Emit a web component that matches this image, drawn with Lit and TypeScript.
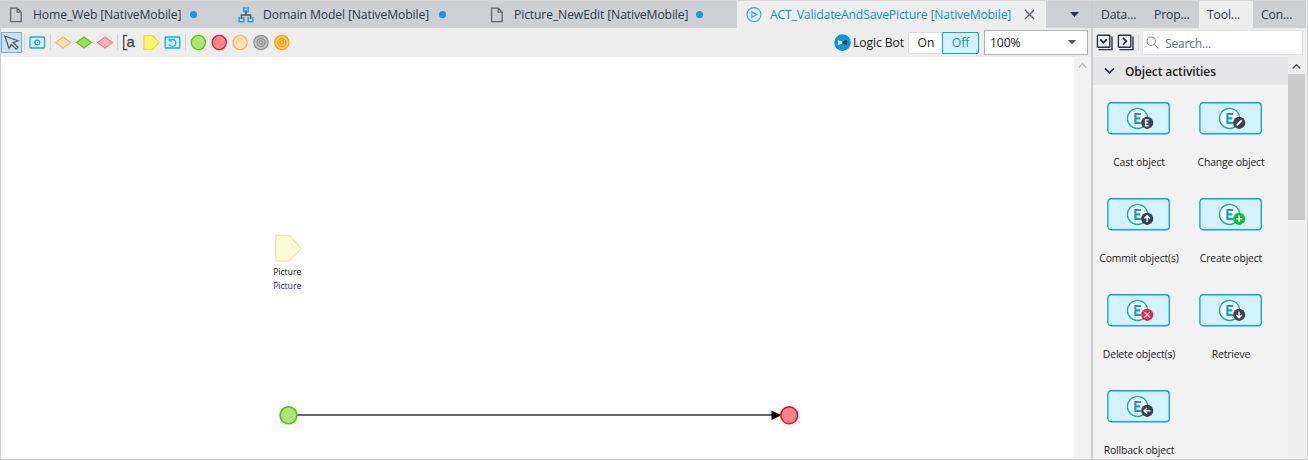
import { LitElement, html, svg, css } from "lit";
import { customElement } from "lit/decorators.js";
import { classMap } from "lit/directives/class-map.js";

const pageIcon = html`<svg width="14" height="16" viewBox="0 0 14 16" fill="none" stroke="#666" stroke-width="1.3"><path d="M1.6 1.1H8.2L12.2 5.2V14.6H1.6Z M8.2 1.1V5.2H12.2"/></svg>`;
const domainIcon = html`<svg width="16" height="16" viewBox="0 0 16 16" fill="none"><g stroke="#1aa5f5" stroke-width="1.5"><path d="M6.8 .9H5.8V4.8H10.2V.9H9.2"/><path d="M2.3 10.8H1.2V14.7H5.8V10.8H4.6"/><path d="M11.3 10.8H10.2V14.7H14.8V10.8H13.7"/><path d="M6.5 .9H9.5" stroke-width="1.2"/></g><path d="M8 3.2V8 M3.4 12V8H12.6V12" stroke="#555" stroke-width="1.4"/></svg>`;
const flowIcon = html`<svg width="16" height="16" viewBox="0 0 16 16" fill="none" stroke="#29abf2" stroke-width="1.2"><circle cx="8" cy="7.6" r="7"/><path d="M5.8 5L11 7.6L5.8 10.2Z"/></svg>`;

const badges: Record<string, unknown> = {
  cast: svg`<path d="M41.7 24.3H38.5V30.1H41.7M38.5 27.2H41.4" stroke="#fff" stroke-width="1.4" fill="none"/>`,
  change: svg`<path d="M37.6 29.8L42.6 24.8" stroke="#fff" stroke-width="1.9"/>`,
  commit: svg`<path d="M40 30.5V24.5M37.2 27L40 24.2L42.8 27" stroke="#fff" stroke-width="1.4" fill="none"/>`,
  create: svg`<path d="M40 24V30.4M36.8 27.2H43.2" stroke="#fff" stroke-width="1.5"/>`,
  delete: svg`<path d="M37.3 24.5L42.7 29.9M42.7 24.5L37.3 29.9" stroke="#fff" stroke-width="1.1"/>`,
  retrieve: svg`<path d="M40 24V30M37.2 27.4L40 30.2L42.8 27.4" stroke="#fff" stroke-width="1.4" fill="none"/>`,
  rollback: svg`<path d="M43.2 27.2H37M39.8 24.4L37 27.2L39.8 30" stroke="#fff" stroke-width="1.4" fill="none"/>`,
};

@customElement("activity-tile")
class ActivityTile extends LitElement {
  static properties = { kind: {}, label: {} };
  declare kind: string;
  declare label: string;
  static styles = css`
    :host { display: flex; flex-direction: column; align-items: center; width: 92px; height: 96px; }
    svg { display: block; margin-top: 11px; }
    .name { margin-top: 19px; line-height: 16px; font-size: 10.4px; letter-spacing: -0.16px; color: #222; white-space: nowrap; }
  `;
  render() {
    const fill = this.kind === "create" ? "#0cc22c" : this.kind === "delete" ? "#f5224a" : "#3a4150";
    return html`<svg width="64" height="34" viewBox="0.6 -0.6 64 34" fill="none">
        <rect x="1.5" y="1.2" width="61.4" height="31" rx="3.2" fill="#d4f2ff" stroke="#0aa6f5" stroke-width="1.4"/>
        <circle cx="31.2" cy="16.8" r="10.1" fill="#fff" stroke="#0aa6f5" stroke-width="1.3"/>
        <path d="M34.5 12.4H29V21.3H34.5M29 16.8H34" stroke="#0a9be8" stroke-width="2.1"/>
        <circle cx="40.8" cy="21.2" r="6.1" fill=${fill}/>
        <g transform="translate(0.7 -6)">${badges[this.kind]}</g>
      </svg>
      <div class="name">${this.label}</div>`;
  }
}

@customElement("app-root")
class AppRoot extends LitElement {
  static styles = css`
    :host { display: block; width: 1308px; height: 460px; font-family: "Open Sans", "Noto Sans", sans-serif; color: #333a48; overflow: hidden; }
    * { box-sizing: border-box; }
    svg { display: block; flex: none; }
    .window { display: flex; height: 460px; background: #ededed; border-top: 1px solid #d8d8d8; border-bottom: 1px solid #cfcfcf; white-space: nowrap; }
    .editor { width: 1091px; display: flex; flex-direction: column; border-left: 1px solid #cfcfcf; }
    .tabs { display: flex; height: 27px; background: #cdcfd2; font-size: 12.2px; letter-spacing: -0.14px; line-height: 27px; }
    .tab { display: flex; align-items: center; }
    .tab.home { width: 229px; padding-left: 8px; }
    .tab.domain { width: 251px; padding-left: 8px; }
    .tab.edit { width: 256px; padding-left: 9px; }
    .tab.flow { width: 309px; padding-left: 9px; background: #ededed; color: #0a93dd; }
    .title { margin-left: 10px; }
    .home .title { width: 149px; }
    .domain .title { width: 168px; margin-left: 9px; }
    .edit .title { width: 174px; }
    .flow .title { width: 242px; margin-left: 8px; letter-spacing: -0.17px; }
    .dot { width: 7px; height: 7px; border-radius: 50%; background: #0a9bf2; margin-left: 8px; }
    .close { margin-left: 12px; }
    .drop { margin-left: 24px; align-self: center; }
    .tools { height: 29px; display: flex; align-items: center; }
    .logic { display: flex; align-items: center; margin-left: auto; font-size: 12.2px; letter-spacing: -0.1px; color: #222; }
    .logic .caption { width: 53px; margin-left: 2px; }
    .toggle { display: flex; width: 71px; height: 22px; margin-left: 2px; margin-top: 1px; background: #fff; border: 1px solid #ddd; border-radius: 2px; line-height: 20px; text-align: center; }
    .toggle .off { width: 37px; margin: -1px; border: 1px solid #0aa6f5; border-radius: 0 2px 2px 0; background: #d4f2ff; color: #0a93dd; }
    .toggle .on { width: 34px; }
    .zoom { width: 104px; height: 25px; margin: 0 3px 0 5px; background: #fff; border: 1px solid #b4b4b4; display: flex; align-items: center; justify-content: space-between; padding: 0 11px 1px 5px; }
    .work { flex: 1; display: flex; background: #fff; }
    .canvas { flex: 1; }
    .canvas text { font-size: 8.8px; letter-spacing: -0.1px; text-anchor: middle; }
    .scroll { width: 17px; background: #f2f2f2; padding: 5px 0 0 4px; }
    .panel { width: 215px; border-left: 2px solid #cbccce; display: flex; flex-direction: column; background: #ededed; }
    .edge { width: 2px; background: #d6d6d8; border-left: 1px solid #eee; }
    .ptabs { display: flex; background: #cdcfd2; height: 27px; line-height: 27px; font-size: 12.2px; letter-spacing: -0.15px; }
    .ptab { width: 53px; padding-left: 8px; }
    .ptab.active { background: #ededed; width: 54px; }
    .search { height: 29px; display: flex; align-items: center; padding-left: 3px; }
    .sep { width: 1px; height: 17px; background: #d5d5d5; margin: 0 3px 0 0; }
    .field { width: 161px; height: 25px; background: #fff; border: 1px solid #e2e2e2; display: flex; align-items: center; font-size: 12.2px; letter-spacing: -0.25px; color: #6b717d; padding-left: 3px; }
    .field span { margin-left: 6px; padding-top: 1px; }
    .body { flex: 1; display: flex; min-height: 0; }
    .list { width: 195px; background: #f2f2f2; overflow: hidden; }
    .head { height: 28px; background: #e6e6e8; display: flex; align-items: center; padding-left: 11px; font-size: 12px; letter-spacing: -0.1px; font-weight: 600; color: #1c1c1c; }
    .head span { margin-left: 10px; padding-top: 1px; }
    .grid { display: grid; grid-template-columns: 92px 92px; padding-top: 5px; }
    .bar { width: 17px; background: #efefef; }
    .up { height: 17px; padding: 6px 0 0 4px; }
    .thumb { height: 146px; background: #cbcbcb; }
  `;

  private tab(kind: string, icon: unknown, title: string, active = false) {
    return html`<div class=${classMap({ tab: true, [kind]: true })}>${icon}<span class="title">${title}</span>${active
      ? html`<svg class="close" width="11" height="11" viewBox="0 0 11 11"><path d="M1 1L10 10M10 1L1 10" stroke="#596070" stroke-width="1.4"/></svg>`
      : html`<span class="dot"></span>`}</div>`;
  }

  private toolIcons() {
    return html`<svg width="300" height="29" viewBox="1 28 300 29" fill="none">
      <rect x="1.5" y="32.5" width="20" height="20" fill="#c5e0f7" stroke="#78aee0"/>
      <path d="M4.8 36L18 40.7L13.2 42.6L18 47.3L16.2 49.2L11.4 44.5L9 48.4Z" stroke="#555" stroke-width="1.2"/>
      <path d="M24.5 34V50M50.5 34V50M117.5 34V50M185.5 34V50" stroke="#d4d4d4"/>
      <rect x="30" y="37" width="14.6" height="11" rx="1" fill="#d4f2ff" stroke="#1aa8f5" stroke-width="1.3"/><circle cx="37.3" cy="42.5" r="2.4" stroke="#1aa8f5" stroke-width="1.2"/><path d="M37 42.5H37.8" stroke="#1aa8f5"/>
      <path d="M63 37L70.4 42.5L63 48L55.6 42.5Z" fill="#ffdfb5" stroke="#ffb45c" stroke-width="1.1"/>
      <path d="M84 37L91.4 42.5L84 48L76.6 42.5Z" fill="#9add59" stroke="#5fc411" stroke-width="1.2"/>
      <path d="M105 37L112.4 42.5L105 48L97.6 42.5Z" fill="#ffb1b8" stroke="#ff7784" stroke-width="1.1"/>
      <path d="M127.3 35.5H123.7V49.5H127.3" stroke="#555" stroke-width="1.4"/>
      <text x="126.5" y="47" font-size="15" fill="#4a4a4a" stroke="#4a4a4a" stroke-width=".35" font-family="Liberation Sans, sans-serif">a</text>
      <path d="M144 35.7H152.7L159 42.5L152.7 49.3H144Z" fill="#fff56b" stroke="#f3cf19" stroke-width="1.1"/>
      <rect x="165.2" y="37" width="14.6" height="11" rx=".6" fill="#d4f2ff" stroke="#1aa8f5" stroke-width="1.3"/>
      <path d="M170 40.2A3.5 3.5 0 1 1 169 43.8M169.2 38.6V41H171.6" stroke="#1aa8f5" stroke-width="1.2"/>
      <circle cx="198.4" cy="42.5" r="7.1" fill="#ace576" stroke="#5cc811" stroke-width="1.3"/>
      <circle cx="219.3" cy="42.5" r="7.1" fill="#ff858d" stroke="#f1152b" stroke-width="1.3"/>
      <circle cx="240.1" cy="42.5" r="7.1" fill="#ffdfb5" stroke="#ffb45c" stroke-width="1.3"/>
      <g stroke="#949494" stroke-width="1.3"><circle cx="261" cy="42.5" r="7.1" fill="#c2c2c2"/><circle cx="261" cy="42.5" r="4"/><circle cx="261" cy="42.5" r="1.8"/></g>
      <g stroke="#ff9f0e" stroke-width="1.3"><circle cx="281.8" cy="42.5" r="7.1" fill="#ffcb72"/><circle cx="281.8" cy="42.5" r="4"/><circle cx="281.8" cy="42.5" r="1.8"/></g>
    </svg>`;
  }

  private chevronUp(color: string) {
    return html`<svg width="9" height="7" viewBox="0 0 9 7"><path d="M.7 5.5L4.5 1.7L8.3 5.5" fill="none" stroke=${color} stroke-width="1.5"/></svg>`;
  }

  private stack(d: string) {
    return html`<svg width="21" height="18" viewBox="0 0 21 18" fill="none" stroke="#2b3346"><rect x="1.4" y="1.2" width="12.4" height="12" rx=".6" stroke-width="1.4"/><path d="M16 2.5V15.6H2.5" stroke-width="1.4"/><path d=${d} stroke-width="1.8"/></svg>`;
  }

  render() {
    const tiles = [
      ["cast", "Cast object"], ["change", "Change object"], ["commit", "Commit object(s)"], ["create", "Create object"],
      ["delete", "Delete object(s)"], ["retrieve", "Retrieve"], ["rollback", "Rollback object"],
    ];
    return html`<div class="window">
      <div class="editor">
        <div class="tabs">
          ${this.tab("home", pageIcon, "Home_Web [NativeMobile]")}
          ${this.tab("domain", domainIcon, "Domain Model [NativeMobile]")}
          ${this.tab("edit", pageIcon, "Picture_NewEdit [NativeMobile]")}
          ${this.tab("flow", flowIcon, "ACT_ValidateAndSavePicture [NativeMobile]", true)}
          <svg class="drop" width="9" height="5"><path d="M0 0H9L4.5 5Z" fill="#2b3346"/></svg>
        </div>
        <div class="tools">
          ${this.toolIcons()}
          <div class="logic">
            <svg width="17" height="18" viewBox="0 0 17 18"><circle cx="8.5" cy="8.6" r="8.3" fill="#0a96dc"/><path d="M4 6.1L8.2 7.7V9.5L4 11.1Z" fill="#fff"/><path d="M12.8 6.1L8.6 7.7V9.5L12.8 11.1Z" fill="#17364c"/></svg>
            <span class="caption">Logic Bot</span>
            <div class="toggle"><span class="on">On</span><span class="off">Off</span></div>
            <div class="zoom"><span>100%</span><svg width="8" height="5"><path d="M0 0H8L4 4.6Z" fill="#555"/></svg></div>
          </div>
        </div>
        <div class="work">
          <svg class="canvas" width="1073" height="402" viewBox="1 57 1073 402">
            <path d="M275.8 235.3H289L301.3 248.3L289 261H275.8Z" fill="#fffbd6" stroke="#ffd9b0" stroke-width="1.2"/>
            <text x="287.2" y="275" fill="#111">Picture</text>
            <text x="287.2" y="289" fill="#1a0dff">Picture</text>
            <path d="M297 415H774" stroke="#333" stroke-width="1.3"/>
            <path d="M771.5 410.5L781.5 415.2L771.5 420Z" fill="#000"/>
            <circle cx="288.5" cy="415.3" r="8.4" fill="#ade574" stroke="#51c70d" stroke-width="1.6"/>
            <circle cx="789.2" cy="415.3" r="8.4" fill="#ff858d" stroke="#f50f29" stroke-width="1.6"/>
          </svg>
          <div class="scroll">${this.chevronUp("#bdbdbd")}</div>
        </div>
      </div>
      <div class="panel">
        <div class="ptabs"><span class="ptab">Data...</span><span class="ptab">Prop...</span><span class="ptab active">Tool...</span><span class="ptab">Con...</span></div>
        <div class="search">
          ${this.stack("M4.2 5.4L7.5 8.7L10.8 5.4")}${this.stack("M6 4L9.3 7.3L6 10.6")}
          <span class="sep"></span>
          <div class="field"><svg width="13" height="13" viewBox="0 0 13 13" fill="none" stroke="#909090" stroke-width="1.1"><circle cx="5.2" cy="5.2" r="4.2"/><path d="M8.2 8.2L12.3 12.3"/></svg><span>Search...</span></div>
        </div>
        <div class="body">
          <div class="list">
            <div class="head"><svg width="11" height="8" viewBox="0 0 11 8" fill="none"><path d="M1 1.4L5.5 5.9L10 1.4" stroke="#2b3346" stroke-width="1.7"/></svg><span>Object activities</span></div>
            <div class="grid">${tiles.map(([k, l]) => html`<activity-tile .kind=${k} .label=${l}></activity-tile>`)}</div>
          </div>
          <div class="bar"><div class="up">${this.chevronUp("#555")}</div><div class="thumb"></div></div>
        </div>
      </div>
      <div class="edge"></div>
    </div>`;
  }
}
